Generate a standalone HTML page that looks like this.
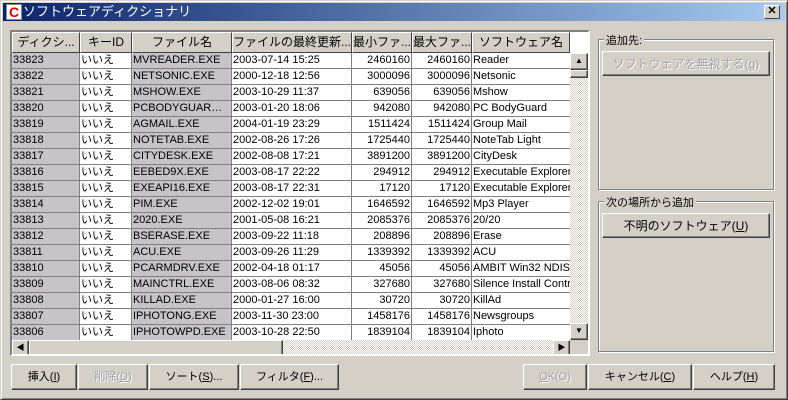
<!DOCTYPE html>
<html><head><meta charset="utf-8"><style>
*{box-sizing:border-box;margin:0;padding:0}
body{width:788px;height:400px;background:#d4d0c8;font-family:"Liberation Sans","Noto Sans CJK JP",sans-serif;font-size:11px;color:#000;position:relative;overflow:hidden}
.win{position:absolute;left:0;top:0;width:788px;height:400px;border:1px solid;border-color:#d4d0c8 #404040 #404040 #d4d0c8;box-shadow:inset 1px 1px #fff,inset -1px -1px #808080}
.title{position:absolute;left:3px;top:3px;width:782px;height:18px;background:linear-gradient(90deg,#0a246a,#a6caf0);color:#fff;font-size:13px;line-height:18px;padding-left:20px}
.ico{position:absolute;left:3px;top:1px;width:16px;height:16px;background:#fff;border:1px solid #888;color:#d00;font-weight:bold;font-size:14px;line-height:14px;text-align:center}
.close{position:absolute;left:764px;top:5px;width:16px;height:14px;background:#d4d0c8;border:1px solid;border-color:#fff #404040 #404040 #fff;font-size:11px;line-height:11px;text-align:center;font-weight:bold}
.a{position:absolute}
.btn{position:absolute;height:26px;border:1px solid;border-color:#fff #404040 #404040 #fff;box-shadow:inset -1px -1px #808080;text-align:center;line-height:24px;font-size:11px;background:#d4d0c8}
.dis{color:#a0a0a0;text-shadow:1px 1px #fff}
.tbl{position:absolute;left:10px;top:30px;width:580px;height:326px;border:2px solid;border-color:#808080 #fff #fff #808080;background:#fff;overflow:hidden}
.hd{position:absolute;top:0;height:21px;border:1px solid;border-color:#fff #404040 #404040 #fff;background:#d4d0c8;text-align:center;line-height:19px;white-space:nowrap;overflow:hidden;font-size:12px}
.c{position:absolute;height:16px;border-right:1px solid #808080;border-bottom:1px solid #808080;line-height:15px;white-space:nowrap;overflow:hidden;text-overflow:ellipsis;padding:0 1px}
.g{background:#c6c3c9}
.r{text-align:right}
.grp{position:absolute;border:1px solid #808080;box-shadow:1px 1px #fff,inset 1px 1px #fff}
.grp span{position:absolute;left:5px;top:-8px;background:#d4d0c8;padding:0 2px}
.chk{background:repeating-conic-gradient(#d4d0c8 0 25%,#fff 0 50%) 0 0/2px 2px}
</style></head><body>
<div class="win"></div>
<div class="title"><div class="ico">C</div>ソフトウェアディクショナリ</div>
<div class="close">✕</div>

<div class="tbl">
<div class="hd" style="left:0;width:68px">ディクシ...</div>
<div class="hd" style="left:68px;width:52px">キーID</div>
<div class="hd" style="left:120px;width:100px">ファイル名</div>
<div class="hd" style="left:220px;width:120px">ファイルの最終更新...</div>
<div class="hd" style="left:340px;width:60px">最小ファ...</div>
<div class="hd" style="left:400px;width:60px">最大ファ...</div>
<div class="hd" style="left:460px;width:98px">ソフトウェア名</div>
<div id="rows"></div>
<div class="a chk" style="left:558px;top:21px;width:18px;height:287px"></div>
<div class="btn" style="left:558px;top:21px;width:18px;height:17px;line-height:14px;font-size:8px">▲</div>
<div class="btn" style="left:558px;top:38px;width:18px;height:8px"></div>
<div class="btn" style="left:558px;top:291px;width:18px;height:17px;line-height:14px;font-size:8px">▼</div>
<div class="a chk" style="left:0;top:308px;width:558px;height:16px"></div>
<div class="btn" style="left:0;top:308px;width:17px;height:16px;line-height:13px;font-size:8px">◀</div>
<div class="btn" style="left:17px;top:308px;width:254px;height:16px"></div>
<div class="btn" style="left:541px;top:308px;width:17px;height:16px;line-height:13px;font-size:8px">▶</div>
<div class="a" style="left:558px;top:308px;width:18px;height:16px;background:#d4d0c8"></div>
</div>

<div class="grp" style="left:598px;top:39px;width:176px;height:151px"><span>追加先:</span></div>
<div class="btn dis" style="left:602px;top:51px;width:168px;height:25px;font-size:12px">ソフトウェアを無視する(g)</div>
<div class="grp" style="left:598px;top:201px;width:176px;height:151px"><span>次の場所から追加</span></div>
<div class="btn" style="left:602px;top:213px;width:168px;height:25px;font-size:12px">不明のソフトウェア(<u>U</u>)</div>

<div class="btn" style="left:11px;top:364px;width:66px">挿入(<u>I</u>)</div>
<div class="btn dis" style="left:78px;top:364px;width:70px">削除(<u>D</u>)</div>
<div class="btn" style="left:149px;top:364px;width:90px">ソート(<u>S</u>)...</div>
<div class="btn" style="left:240px;top:364px;width:99px">フィルタ(<u>F</u>)...</div>
<div class="btn dis" style="left:523px;top:364px;width:64px"><u>O</u>K(O)</div>
<div class="btn" style="left:588px;top:364px;width:104px">キャンセル(<u>C</u>)</div>
<div class="btn" style="left:693px;top:364px;width:82px">ヘルプ(<u>H</u>)</div>

<script>
const d=[["33823","MVREADER.EXE","2003-07-14 15:25","2460160","Reader"],
["33822","NETSONIC.EXE","2000-12-18 12:56","3000096","Netsonic"],
["33821","MSHOW.EXE","2003-10-29 11:37","639056","Mshow"],
["33820","PCBODYGUARD.EXE","2003-01-20 18:06","942080","PC BodyGuard"],
["33819","AGMAIL.EXE","2004-01-19 23:29","1511424","Group Mail"],
["33818","NOTETAB.EXE","2002-08-26 17:26","1725440","NoteTab Light"],
["33817","CITYDESK.EXE","2002-08-08 17:21","3891200","CityDesk"],
["33816","EEBED9X.EXE","2003-08-17 22:22","294912","Executable Explorer"],
["33815","EXEAPI16.EXE","2003-08-17 22:31","17120","Executable Explorer"],
["33814","PIM.EXE","2002-12-02 19:01","1646592","Mp3 Player"],
["33813","2020.EXE","2001-05-08 16:21","2085376","20/20"],
["33812","BSERASE.EXE","2003-09-22 11:18","208896","Erase"],
["33811","ACU.EXE","2003-09-26 11:29","1339392","ACU"],
["33810","PCARMDRV.EXE","2002-04-18 01:17","45056","AMBIT Win32 NDIS Filter"],
["33809","MAINCTRL.EXE","2003-08-06 08:32","327680","Silence Install Control"],
["33808","KILLAD.EXE","2000-01-27 16:00","30720","KillAd"],
["33807","IPHOTONG.EXE","2003-11-30 23:00","1458176","Newsgroups"],
["33806","IPHOTOWPD.EXE","2003-10-28 22:50","1839104","Iphoto"]];
let h="";d.forEach((r,i)=>{const t=21+i*16;
h+=`<div class="c g" style="left:0;top:${t}px;width:68px">${r[0]}</div><div class="c" style="left:68px;top:${t}px;width:52px">いいえ</div><div class="c g" style="left:120px;top:${t}px;width:100px">${r[1]}</div><div class="c" style="left:220px;top:${t}px;width:120px">${r[2]}</div><div class="c r" style="left:340px;top:${t}px;width:60px">${r[3]}</div><div class="c r" style="left:400px;top:${t}px;width:60px">${r[3]}</div><div class="c" style="left:460px;top:${t}px;width:98px;border-right:0;text-overflow:clip">${r[4]}</div>`});
document.getElementById("rows").innerHTML=h;
</script>
</body></html>
